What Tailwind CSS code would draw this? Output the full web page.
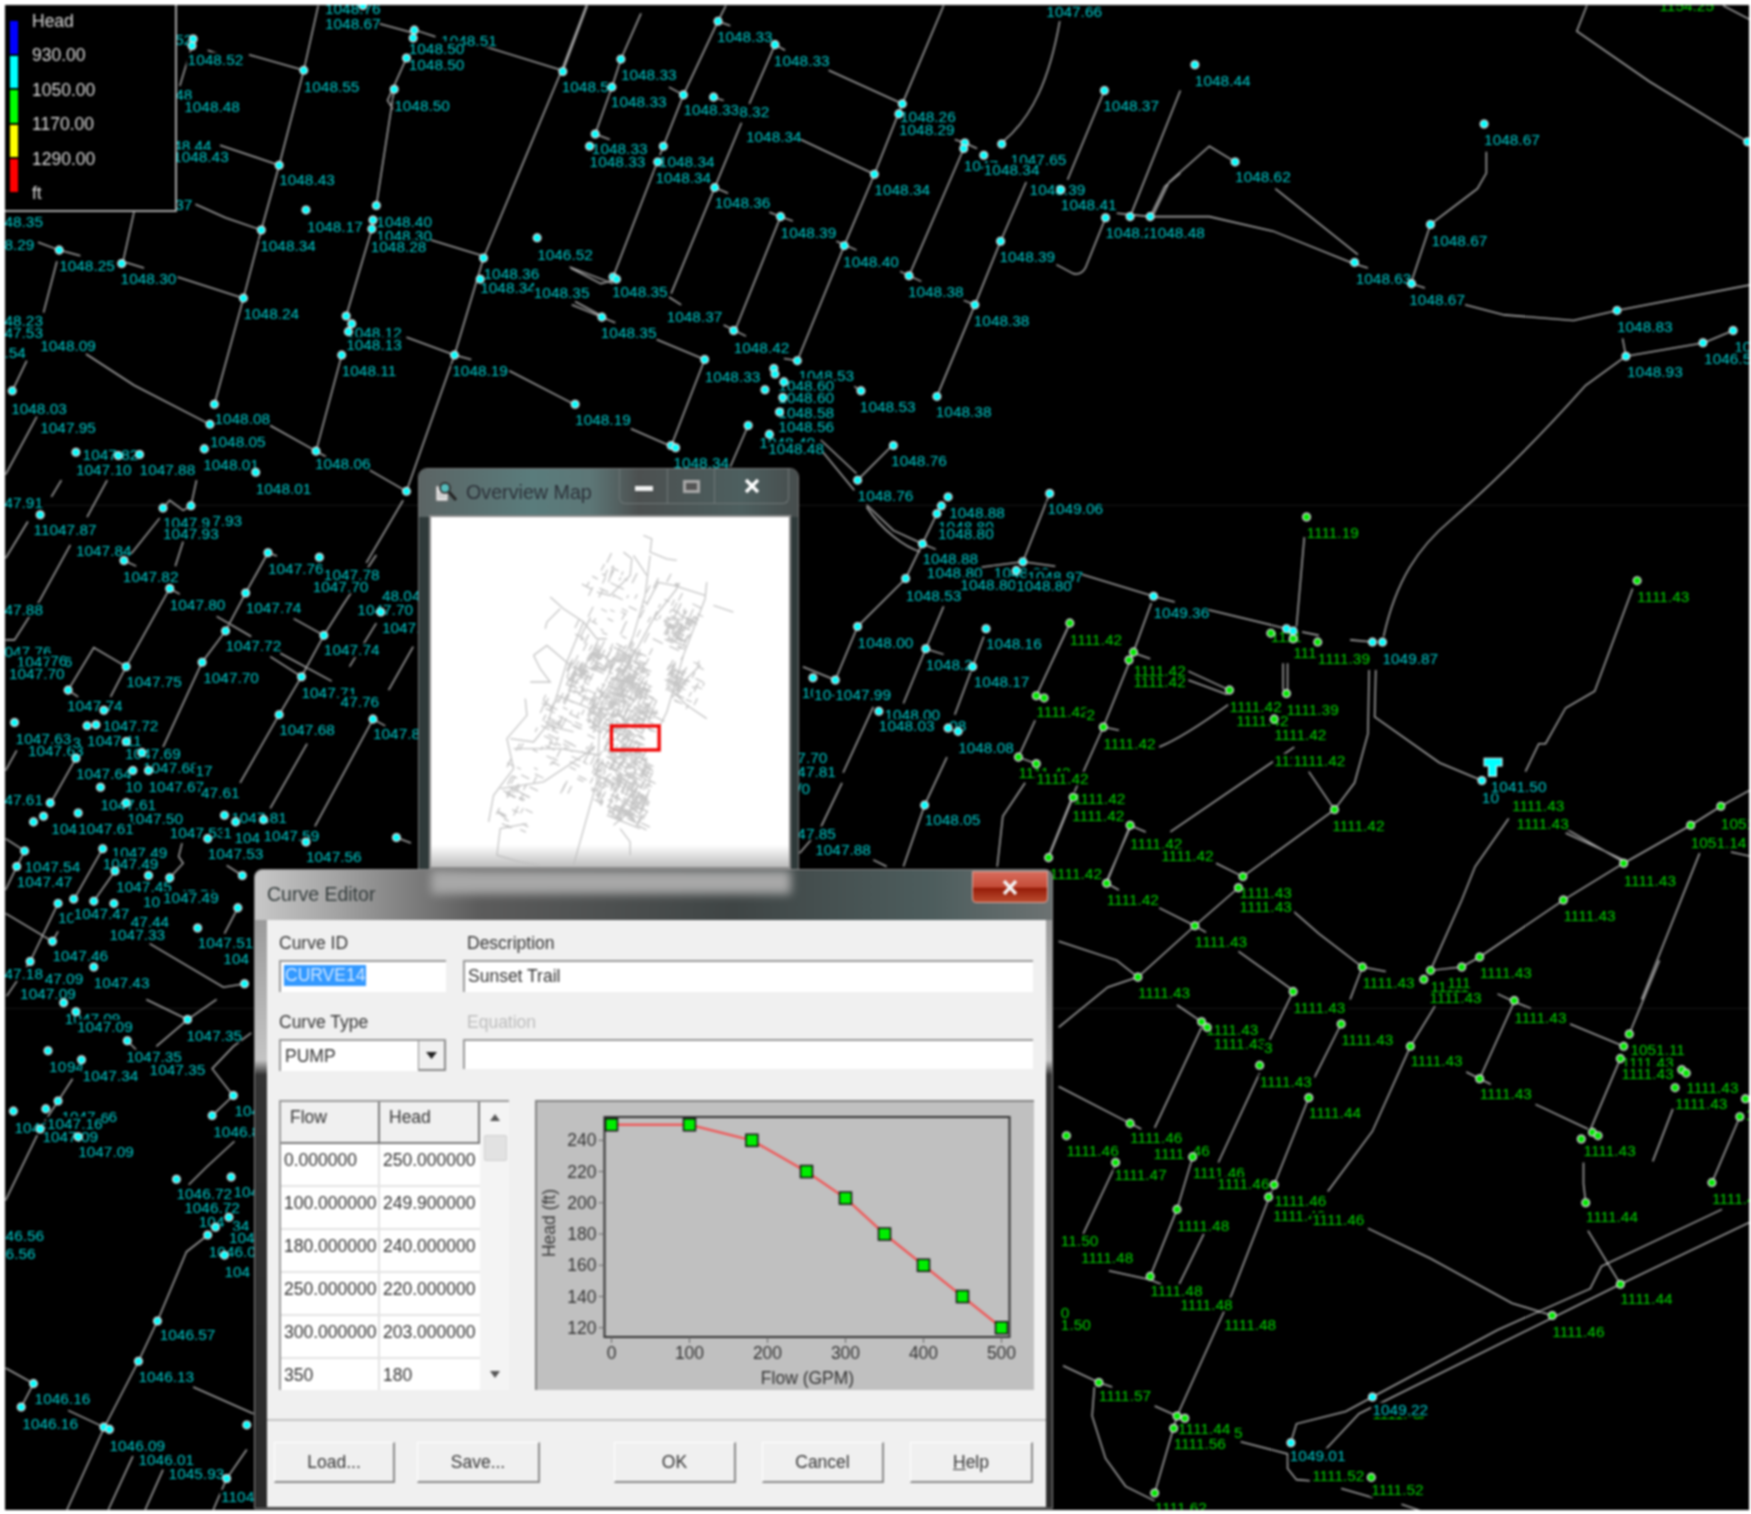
<!DOCTYPE html>
<html lang="en">
<head>
<meta charset="UTF-8">
<script src="https://cdn.jsdelivr.net/npm/@tailwindcss/browser@4"></script>
<title>Network map</title>
</head>
<body>
<div class="relative w-[1751px] h-[1514px] bg-white overflow-hidden [font-family:'Liberation_Sans',Arial,sans-serif] blur-[0.8px]">

  <!-- network canvas -->
  <div class="absolute left-[5px] top-[5px] w-[1744px] h-[1505px] bg-black overflow-hidden">
    <svg id="net" class="block w-full h-full" viewBox="4.5 4.5 1561.7 1347.7"></svg>

    <!-- legend -->
    <div class="absolute left-0 top-0 w-[172px] h-[207px] border-r-2 border-b-2 border-[#a8a8a8] bg-black flex pl-[5px] pt-[16px] gap-[14px]">
      <div class="w-[8px] flex flex-col gap-[2px]">
        <div class="h-[32.500px] bg-[#0000ff]"></div>
        <div class="h-[32.500px] bg-[#00ffff]"></div>
        <div class="h-[32.500px] bg-[#00ff00]"></div>
        <div class="h-[32.500px] bg-[#ffff00]"></div>
        <div class="h-[32.500px] bg-[#ff0000]"></div>
      </div>
      <div class="-mt-[17px] text-[17.5px] leading-[34.4px] text-[#dcdcdc]">
        <div>Head</div><div>930.00</div><div>1050.00</div><div>1170.00</div><div>1290.00</div><div>ft</div>
      </div>
    </div>
  </div>

  <!-- Overview Map window -->
  <div class="absolute left-[418px] top-[468px] w-[381px] h-[410px] rounded-t-[9px] border border-[#777] bg-[linear-gradient(90deg,#2f3a3a,#3b3b3b_50%,#2f3a3a)]">
    <div class="h-[48px] rounded-t-[8px] flex items-start justify-between pl-[14px] pr-[9px] bg-[linear-gradient(90deg,#5b6464,#5a7c7c_30%,#5d7777_45%,#4c5050_58%,#4d5f5f_85%,#474d4d)]">
      <div class="flex items-center gap-[8px] pt-[11px]">
        <svg class="w-[25px] h-[24px]" viewBox="0 0 25 24">
          <path d="M3 6h12v15H3z" fill="#e8e8e8" stroke="#777"/>
          <circle cx="12" cy="8" r="5" fill="#55bcbc" stroke="#333" stroke-width="2"/>
          <path d="M16 12l7 8" stroke="#222" stroke-width="3"/>
          <path d="M5 14h7M5 17h8" stroke="#999"/>
        </svg>
        <span class="text-[19.7px] leading-[24px] text-[#2b3038]">Overview Map</span>
      </div>
      <div class="flex w-[170px] h-[35px] border border-t-0 border-[#707878] rounded-b-[6px] text-white">
        <div class="w-[48px] border-r border-[#707878] flex items-center justify-center"><div class="mt-[4px] w-[18px] h-[5px] bg-[#f0f0f0]"></div></div>
        <div class="w-[47px] border-r border-[#707878] flex items-center justify-center"><div class="w-[17px] h-[13px] border-[3px] border-[#a8a8a8] bg-[#555]"></div></div>
        <div class="flex-1 flex items-center justify-center"><svg class="w-[16px] h-[16px]" viewBox="0 0 16 16"><path d="M2 2l12 12M14 2L2 14" stroke="#fff" stroke-width="3.4"/></svg></div>
      </div>
    </div>
    <div class="relative ml-[12px] w-[358px] h-[350px] bg-white outline-[2px] outline-[#8a8a8a]">
      <svg id="ov" class="block w-full h-full" viewBox="92 205 1075 1050"></svg>
      <div class="absolute left-0 right-0 bottom-0 h-[22px] bg-gradient-to-b from-transparent to-[#bdbdbd]"></div>
    </div>
  </div>

  <!-- Curve Editor window -->
  <div class="absolute left-[254px] top-[869px] w-[799px] h-[640px] rounded-t-[8px] border border-[#8a8a8a] bg-[linear-gradient(180deg,#8c8c8c_0,#c4c4c4_190px,#333_205px,#2a2a2a_100%)]">
    <div class="relative h-[50px] rounded-t-[8px] overflow-hidden flex justify-between bg-[linear-gradient(90deg,#c8c8c8_0%,#a4a4a4_10%,#5c5c5c_28%,#3f4545_60%,#4d5d5d_85%,#6c7272_100%)]">
      <div class="absolute left-[176px] top-[0px] w-[360px] h-[24px] bg-[#a8a8a8] blur-[5px]"></div>
      <span class="relative ml-[12px] mt-[12px] text-[19.5px] leading-[24px] text-[#333b3b]">Curve Editor</span>
      <div class="relative mr-[4px] mt-[1px] w-[76px] h-[32px] rounded-b-[4px] border border-[#d8a8a0] flex items-center justify-center bg-[linear-gradient(180deg,#d86c5c,#c44c38_50%,#961c08_55%,#bb4c30)]">
        <svg class="w-[16px] h-[15px]" viewBox="0 0 16 15"><path d="M2 1l12 13M14 1L2 14" stroke="#f4f4f4" stroke-width="3.4"/></svg>
      </div>
    </div>
    <div class="ml-[12px] mr-[6px] h-[587px] bg-[#f0f0f0] text-[17.5px] leading-[20px] text-[#333] pt-[13px]">
      <div class="grid grid-cols-[167px_570px] gap-x-[17px] px-[12px]">
        <div>Curve ID</div>
        <div class="pl-[4px]">Description</div>
        <div class="mt-[7px] h-[32px] bg-white border-t-2 border-l-2 border-[#9a9a9a] pl-[3px] pt-[3px]"><span class="inline-block bg-[#3399ff] text-[#cfe6ff] px-[1px] leading-[21px]">CURVE14</span></div>
        <div class="mt-[7px] h-[32px] bg-white border-t-2 border-l-2 border-[#9a9a9a] pl-[3px] pt-[4px]">Sunset Trail</div>
        <div class="mt-[20px]">Curve Type</div>
        <div class="mt-[20px] pl-[4px] text-[#bcbcbc]">Equation</div>
        <div class="mt-[7px] h-[32px] bg-white border-t-2 border-l-2 border-[#9a9a9a] pl-[4px] flex justify-between items-center">
          <span>PUMP</span>
          <div class="w-[28px] h-[30px] bg-[#f0f0f0] border-l border-b-2 border-r-2 border-[#8a8a8a] flex items-center justify-center">
            <svg class="w-[11px] h-[7px]" viewBox="0 0 11 7"><path d="M0 0h11L5.500 7z" fill="#222"/></svg>
          </div>
        </div>
        <div class="mt-[7px] h-[30px] bg-white border-t-2 border-l-2 border-[#9a9a9a]"></div>
      </div>

      <div class="mt-[29px] px-[12px] flex gap-[26px] h-[290px]">
        <div class="w-[230px] flex border-t-2 border-l-2 border-[#9a9a9a] bg-white">
          <div class="w-[199px] grid grid-cols-[99px_100px] grid-rows-[42px_43px_43px_43px_43px_43px_1fr] leading-[20px]">
            <div class="bg-[#f0f0f0] border-r-2 border-b-2 border-[#7a7a7a] pl-[9px] pt-[5px]">Flow</div>
            <div class="bg-[#f0f0f0] border-r-2 border-b-2 border-[#7a7a7a] pl-[9px] pt-[5px]">Head</div>
            <div class="pl-[3px] pt-[6px] border-r-2 border-b-2 border-[#e4e4e4]">0.000000</div>
            <div class="pl-[3px] pt-[6px] border-b-2 border-[#e4e4e4]">250.000000</div>
            <div class="pl-[3px] pt-[6px] border-r-2 border-b-2 border-[#e4e4e4]">100.000000</div>
            <div class="pl-[3px] pt-[6px] border-b-2 border-[#e4e4e4]">249.900000</div>
            <div class="pl-[3px] pt-[6px] border-r-2 border-b-2 border-[#e4e4e4]">180.000000</div>
            <div class="pl-[3px] pt-[6px] border-b-2 border-[#e4e4e4]">240.000000</div>
            <div class="pl-[3px] pt-[6px] border-r-2 border-b-2 border-[#e4e4e4]">250.000000</div>
            <div class="pl-[3px] pt-[6px] border-b-2 border-[#e4e4e4]">220.000000</div>
            <div class="pl-[3px] pt-[6px] border-r-2 border-b-2 border-[#e4e4e4]">300.000000</div>
            <div class="pl-[3px] pt-[6px] border-b-2 border-[#e4e4e4]">203.000000</div>
            <div class="pl-[3px] pt-[6px] border-r-2 border-[#e4e4e4]">350</div>
            <div class="pl-[3px] pt-[6px]">180</div>
          </div>
          <div class="relative flex-1 bg-[#f4f4f4] flex flex-col items-center justify-between py-[12px]">
            <svg class="w-[10px] h-[7px]" viewBox="0 0 10 7"><path d="M5 0l5 7H0z" fill="#555"/></svg>
            <div class="absolute left-[4px] top-[33px] w-[23px] h-[26px] bg-[#e2e2e2] border border-[#cfcfcf] rounded-[2px]"></div>
            <svg class="w-[10px] h-[7px]" viewBox="0 0 10 7"><path d="M0 0h10L5 7z" fill="#555"/></svg>
          </div>
        </div>

        <div class="flex-1 bg-[#c0c0c0] border-t-2 border-l-2 border-[#848484]">
          <svg id="chart" class="block w-full h-full" viewBox="0 0 496 288"></svg>
        </div>
      </div>

      <div class="mt-[29px] border-t-2 border-[#c4c4c4]"></div>

      <div class="mt-[21px] px-[7px] flex justify-between text-center leading-[38px]">
        <div class="flex gap-[22px]">
          <div class="w-[121px] h-[41px] border-r-2 border-b-2 border-[#8a8a8a] border-t border-l border-t-white border-l-white">Load...</div>
          <div class="w-[123px] h-[41px] border-r-2 border-b-2 border-[#8a8a8a] border-t border-l border-t-white border-l-white">Save...</div>
        </div>
        <div class="flex gap-[26px] mr-[6px]">
          <div class="w-[122px] h-[41px] border-r-2 border-b-2 border-[#8a8a8a] border-t border-l border-t-white border-l-white">OK</div>
          <div class="w-[122px] h-[41px] border-r-2 border-b-2 border-[#8a8a8a] border-t border-l border-t-white border-l-white">Cancel</div>
          <div class="w-[123px] h-[41px] border-r-2 border-b-2 border-[#8a8a8a] border-t border-l border-t-white border-l-white"><span class="underline">H</span>elp</div>
        </div>
      </div>
    </div>
  </div>
</div>

<script>
// pipes, in the 1568 wide coordinates of the map
const pipes = [
  "M525,5L503,63L433,231L407,318L364,440","M272,63L250,148L234,206L218,267L192,362","M285,5L272,63","M337,184L353,80","M364,52L347,90L352,98","M333,205L310,283","M306,318L283,404",
  "M171,44L161,77","M120,190L110,235","M51,234L39,280","M24,323L11,350","M33,373L5,425","M186,45L200,50","M223,49L272,63","M339,21L372,30","M372,27L390,33","M419,37L503,63",
  "M197,130L250,148","M175,183L202,195L234,206","M34,217L53,224L72,229","M113,235L129,240","M159,248L218,267","M383,214L435,230","M364,302L407,318L422,322","M456,332L516,363","M77,317L120,345L188,380","M242,381L283,404L292,409","M331,421L364,440","M511,240L538,254L553,250","M515,270L539,283",
  "M949,19C940,70 925,105 897,128","M845,5L808,93L783,156L756,220L714,323","M650,5L643,19L612,85L594,131L549,248","M574,12L556,53L548,78L533,120","M526,5L504,64","M694,40L671,93","M664,110L640,168L601,263","M699,194L659,294","M631,322L602,397","M670,381L654,418","M863,133L814,247","M919,163L896,216L873,273L839,355","M989,81L956,161","M1057,81L1012,194","M990,195L972,240Q968,247 961,245L946,237","M1030,194L1043,167L1057,155",
  "M643,19L654,23","M694,40L703,45","M742,63L808,93","M717,125L783,156","M599,78L612,85","M639,87L648,90","M533,120L546,125","M640,168L652,173","M689,190L699,194L710,198","M749,216L767,224","M806,243L825,252","M863,269L873,273","M588,304L631,322","M510,239L549,254","M512,273L539,284L551,289","M599,266L610,273","M648,291L668,301","M565,384L604,401","M702,321L714,323","M765,346L771,350","M735,394L767,424","M799,399L768,430","M855,125L864,128L875,133",
  "M1000,191L1030,194L1057,194L1083,194L1140,207L1212,236","M1032,194L1047,163L1083,131L1106,145","M1142,169L1216,228","M1281,201L1264,252","M1331,136L1331,155L1323,169L1281,201","M1212,236L1225,240","M1264,254L1276,258","M1312,273L1347,282L1409,287L1448,278L1568,255","M1453,303L1456,319","M1456,319L1526,307L1552,296","M1421,5L1412,28L1477,73L1565,127","M1543,5L1568,18",
  "M737,405L765,439","M776,452L800,475L826,487L838,492","M776,454C790,475 810,490 824,494","M839,460L826,487L811,518L768,561L748,609","M940,442L916,503","M878,508L916,503L945,507","M964,513L1033,534L1052,539","M1031,540L1015,584L988,651L960,714L940,764","M1082,546L1152,563L1181,569","M1209,573L1229,575","M845,543L829,581L809,630","M829,581L845,586","M881,570L871,597L855,640","M848,678L828,721L809,776","M958,558L928,623","M927,645L912,678L928,684","M918,701L898,731L893,776","M719,597L748,609","M782,633L755,692","M754,701L734,743L716,764","M782,770L794,776","M961,714L939,768","M1013,739L990,791",
  "M1239,570C1250,520 1270,490 1300,465C1340,430 1380,390 1420,345L1456,319","M1168,481L1161,561","M956,563L940,597","M1016,585L1030,590","M1064,601L1101,618","M1064,609L1099,622","M1038,669Q1060,660 1100,631","M988,651L1002,654","M1149,594L1149,618","M1153,594L1153,620","M1226,600L1225,657L1213,701L1195,725","M1232,600L1231,642L1289,683L1327,699","M1172,691L1195,725","M1048,745L1159,669","M1195,725L1113,785L1089,773","M1012,739L1026,745","M1012,739L991,791","M991,791L1002,797","M1038,813L1070,829L1080,835","M1109,795L1070,829L1019,875L992,884L948,920","M1109,852L1158,887","M1157,815L1181,836L1220,866L1241,870","M1220,866L1209,895","M1351,733L1321,776L1309,806L1281,869L1309,866","M1309,866L1325,857L1400,806L1454,773L1514,739L1541,722L1568,707","M1402,746L1454,770","M1402,742L1456,773","M1522,764L1470,895","M1550,763L1568,767","M1366,691L1378,666L1384,666L1402,634L1428,619L1462,527","M948,843L1000,860L1019,875",
  "M1054,900L1076,915","M1076,920L1034,1010","M1158,888L1137,931","M1128,961L1091,1041","M1201,917L1177,965","M1172,983L1141,1061L1103,1159L1054,1268L1034,1337","M1285,901L1263,937L1229,1013L1189,1067","M1356,897L1325,966","M1486,860L1459,926","M1451,948L1424,1012","M1498,993L1480,1040","M1558,1000L1533,1059","M1418,1041L1418,1060L1420,1077","M1341,890L1356,897L1371,903","M1406,917L1454,937","M1313,960L1325,966L1335,971","M1375,989L1422,1011","M948,973L1012,1006L1022,1011","M1000,1041L970,1105","M1068,1036L1054,1083L1030,1143","M1078,1105L1056,1150","M993,1138L1030,1146L1040,1150","M1225,1100L1281,1127L1354,1167L1390,1178","M1422,1102L1451,1150","M952,1223L984,1238L996,1242","M980,1242L978,1268L990,1306L1008,1331L1034,1344","M1034,1259L1054,1268","M1111,1291L1153,1302L1153,1315L1161,1325L1173,1326","M1201,1333L1229,1341","M1255,1347L1281,1356","M1157,1288L1161,1275L1205,1264L1229,1251L1341,1191L1424,1154L1434,1134L1542,1083","M1187,1298L1217,1266L1451,1150L1568,1094",
  "M146,455L152,448L164,457L171,453","M171,453L176,430","M96,430L78,463","M55,430L46,445","M25,467L5,500","M63,488L36,537L13,573L5,573","M143,464L119,494L111,502","M164,485L157,507","M111,502L122,507","M152,527L113,597L99,624","M152,527L161,532","M361,448L328,504","M240,495L220,531L202,565L181,593L146,669","M307,542L290,569L270,606L250,640L215,701","M337,497L307,542","M337,558L313,597","M275,666L242,724","M370,579L348,618","M334,644L282,740","M248,498L240,495","M225,570L194,552","M297,610L251,585","M270,606L242,588","M263,554L290,569","M61,618L84,580L113,597","M61,618L70,624","M68,679L46,718","M15,672L5,690","M5,751L22,762","M22,762L15,776L5,797","M92,760L67,804","M103,780L84,807","M52,809L27,861L6,892","M5,818L47,843L52,834","M134,845L200,884L219,881","M163,755L160,767L164,773L152,786","M203,775L217,784","M213,813L201,836","M334,644L345,650","M355,750L368,755",
  "M131,895L168,913L194,895","M168,913L140,937","M225,925L209,937L190,957L207,979","M209,981L190,999","M114,932L122,940","M210,1022L185,1045L169,1061","M65,966L52,986L37,1009L5,1075","M186,1106L167,1121L141,1183L124,1219L93,1279L60,1352","M5,1225L30,1239L19,1260","M61,1263L93,1278","M119,1304L97,1352","M146,1316L130,1352","M173,1242L227,1266","M221,1298L203,1324L191,1352"
];

// node dots
const cyanNodes = [[173,35],[172,41],[272,63],[353,80],[371,27],[370,34],[364,52],[325,5],[250,148],[234,206],[274,188],[337,184],[333,205],[334,197],[53,224],[109,236],[218,267],[310,283],[315,290],[312,297],[306,318],[407,318],[433,231],[430,250],[481,213],[11,350],[192,362],[188,380],[183,402],[283,404],[229,423],[68,405],[106,408],[125,407],[364,440],
[643,19],[694,40],[556,53],[548,78],[612,85],[639,87],[533,120],[528,131],[594,131],[589,145],[640,168],[699,194],[756,220],[814,247],[873,273],[783,156],[808,93],[805,102],[864,128],[863,133],[881,139],[897,129],[950,170],[896,216],[989,81],[990,195],[1012,194],[1030,194],[839,355],[771,350],[714,323],[693,330],[694,335],[702,342],[685,349],[701,356],[698,369],[670,381],[689,389],[800,399],[657,296],[631,322],[539,284],[549,248],[552,250],[515,362],[601,399],[605,401],[504,64],[1070,58],[1106,145],[1329,111],[1281,201],[1213,235],[1264,254],[1448,278],[1456,319],[1525,307],[1552,296],[1565,127],
[768,430],[849,445],[843,453],[839,460],[826,487],[940,442],[916,503],[910,511],[1033,534],[811,518],[768,561],[883,563],[829,581],[871,597],[728,607],[748,609],[787,637],[849,652],[858,655],[828,721],[1152,563],[1158,565],[1229,575],[1238,575],[1327,699],[1229,1251],[1156,1292],
[146,455],[171,453],[36,461],[111,502],[152,527],[240,495],[220,531],[286,499],[341,548],[290,569],[202,565],[181,593],[270,606],[113,597],[61,618],[93,636],[78,650],[86,649],[13,647],[113,664],[68,679],[250,640],[334,644],[127,674],[119,690],[133,690],[90,705],[45,719],[39,731],[30,736],[113,719],[70,728],[201,730],[211,736],[236,734],[186,751],[274,754],[355,750],[22,762],[15,776],[92,760],[103,780],[133,784],[152,786],[217,784],[213,813],[52,809],[66,805],[84,807],[102,809],[177,831],[47,843],[27,861],[84,866],[219,881],
[57,898],[68,906],[168,913],[114,932],[43,941],[73,949],[209,981],[190,999],[52,986],[41,993],[12,995],[36,1011],[70,1018],[158,1056],[207,1054],[205,1090],[193,1099],[186,1106],[201,1124],[141,1183],[124,1219],[30,1239],[19,1260],[93,1278],[98,1280],[221,1276],[203,1324]];

const greenNodes = [[1170,463],[1015,584],[1011,591],[1101,618],[1141,644],[1152,621],[988,651],[958,558],[1138,567],[1158,572],[1180,575],[1195,725],[1466,520],[1514,739],[1541,722],[1454,773],[1400,806],[961,714],[1012,739],[991,791],[1113,785],[1109,795],[1070,829],[1019,875],[1220,866],[1281,869],[1275,877],[1309,866],[1325,857],[1158,888],[1356,896],[928,623],[935,625],[912,678],[928,684],[939,768],
[1076,915],[1081,920],[1201,917],[1263,937],[1454,937],[1459,926],[1451,948],[1128,954],[1325,966],[1172,983],[1506,958],[1510,961],[1500,974],[1563,984],[1558,1000],[1012,1006],[955,1017],[1068,1036],[999,1041],[1141,1061],[1136,1072],[1054,1083],[1426,1014],[1431,1017],[1416,1020],[1420,1077],[1533,1059],[1030,1143],[1451,1150],[1390,1178],[984,1238],[1054,1268],[1061,1270],[1051,1279],[1034,1337],[1228,1323]];

// labels: earlier ones get cut off by the black box of later ones, as in the map
const cyanLabels = [
[291,8,"1048.76"],[291,21,"1048.67"],[395,36,"1048.51"],[366,43,"1048.50"],[366,58,"1048.50"],[353,94,"1048.50"],[157,35,"52"],[168,53,"1048.52"],[272,77,"1048.55"],[157,85,"48"],[165,95,"1048.48"],[155,130,"48.44"],[155,140,"1048.43"],[250,161,"1048.43"],[157,183,"37"],[233,220,"1048.34"],[275,203,"1048.17"],[337,198,"1048.40"],[337,211,"1048.30"],[332,221,"1048.28"],[4,198,"48.35"],[4,219,"8.29"],[53,238,"1048.25"],[108,249,"1048.30"],[218,281,"1048.24"],[4,287,"48.23"],[4,298,"47.53"],[4,316,".54"],[36,309,"1048.09"],[310,298,"1048.12"],[310,308,"1048.13"],[306,332,"1048.11"],[405,332,"1048.19"],[515,376,"1048.19"],[433,245,"1048.36"],[430,257,"1048.34"],[478,262,"1048.35"],[481,228,"1046.52"],[10,366,"1048.03"],[36,383,"1047.95"],[192,375,"1048.08"],[188,395,"1048.05"],[182,416,"1048.01"],[282,415,"1048.06"],[229,437,"1048.01"],[74,407,"1047.82"],[68,420,"1047.10"],[125,420,"1047.88"],
[642,33,"1048.33"],[693,54,"1048.33"],[556,67,"1048.33"],[503,77,"1048.5"],[547,91,"1048.33"],[612,98,"1048.33"],[662,100,"8.32"],[668,122,"1048.34"],[530,133,"1048.33"],[528,145,"1048.33"],[590,145,"1048.34"],[587,159,"1048.34"],[640,181,"1048.36"],[699,208,"1048.39"],[755,234,"1048.40"],[813,261,"1048.38"],[872,287,"1048.38"],[538,298,"1048.35"],[597,283,"1048.37"],[548,261,"1048.35"],[783,170,"1048.34"],[806,104,"1048.26"],[805,116,"1048.29"],[863,148,"1047"],[905,143,"1047.65"],[881,152,"1048.34"],[922,170,"1048.39"],[950,183,"1048.41"],[990,208,"1048.2"],[1029,208,"1048.48"],[895,230,"1048.39"],[988,94,"1048.37"],[1070,72,"1048.44"],[1106,158,"1048.62"],[1329,125,"1048.67"],[1282,215,"1048.67"],[1214,249,"1048.63"],[1262,268,"1048.67"],[1448,292,"1048.83"],[1457,333,"1048.93"],[1553,310,"10"],[1526,321,"1046.5"],[657,311,"1048.42"],[631,337,"1048.33"],[715,336,"1048.53"],[697,345,"1048.60"],[697,356,"1048.60"],[697,369,"1048.58"],[697,382,"1048.56"],[680,396,"1048.40"],[688,402,"1048.48"],[770,364,"1048.53"],[838,368,"1048.38"],[798,412,"1048.76"],[603,414,"1048.34"],
[768,444,"1048.76"],[850,459,"1048.88"],[840,471,"1048.80"],[840,478,"1048.80"],[938,455,"1049.06"],[826,500,"1048.88"],[830,513,"1048.80"],[890,513,"1048.80"],[920,516,"1048.97"],[860,523,"1048.80"],[910,524,"1048.80"],[811,533,"1048.53"],[1033,548,"1049.36"],[768,575,"1048.00"],[883,576,"1048.16"],[829,595,"1048.2"],[872,610,"1048.17"],[718,620,"10"],[729,622,"10-"],[748,622,"1047.99"],[792,640,"1048.00"],[850,650,"08"],[787,650,"1048.03"],[858,669,"1048.08"],[828,734,"1048.05"],[714,678,"7.70"],[714,691,"47.81"],[714,706,"/0"],[714,746,"47.85"],[730,761,"1047.88"],
[4,450,"47.91"],[30,474,"11047.87"],[68,493,"1047.84"],[110,516,"1047.82"],[146,468,"1047.93"],[146,478,"1047.93"],[190,466,"7.93"],[152,541,"1047.80"],[220,544,"1047.74"],[240,509,"1047.76"],[280,525,"1047.70"],[290,514,"1047.78"],[342,533,"48.04"],[320,546,"1047.70"],[342,562,"1047."],[202,578,"1047.72"],[290,582,"1047.74"],[113,610,"1047.75"],[182,607,"1047.70"],[270,620,"1047.71"],[305,628,"47.76"],[4,546,"47.88"],[4,583,"047.76"],[15,592,"1047.76"],[45,591,"76"],[8,603,"1047.70"],[60,632,"1047.74"],[92,650,"1047.72"],[250,653,"1047.68"],[334,657,"1047.8"],[25,672,"1047.63"],[14,661,"1047.63"],[65,665,"3"],[78,663,"1047.11"],[112,675,"1047.69"],[68,693,"1047.64"],[128,687,"1047.68"],[175,690,"17"],[112,704,"10"],[133,704,"1047.67"],[180,710,"47.61"],[4,716,"47.61"],[90,720,"1047.61"],[46,742,"1047.11"],[114,733,"1047.50"],[70,742,"1047.61"],[152,745,"1047.53"],[207,732,"1047.81"],[200,745,"1"],[210,750,"104"],[236,748,"1047.59"],[186,764,"1047.53"],[274,767,"1047.56"],[22,776,"1047.54"],[15,789,"1047.47"],[100,763,"1047.49"],[92,773,"1047.49"],[104,794,"1047.45"],[160,801,"47.51"],[128,807,"10"],[146,804,"1047.49"],[52,822,"10"],[66,818,"1047.47"],[98,837,"1047.33"],[117,825,"47.44"],[177,844,"1047.51"],[200,858,"104"],[47,856,"1047.46"],[4,872,"47.18"],[40,876,"47.09"],[84,880,"1047.43"],[18,890,"1047.09"],
[58,912,"1047.09"],[69,919,"1047.09"],[167,927,"1047.35"],[113,946,"1047.35"],[134,958,"1047.35"],[44,955,"1047"],[60,955,"94"],[74,963,"1047.34"],[55,1000,"1047.16"],[90,1001,"6"],[13,1010,"1048"],[38,1018,"1047.09"],[42,1006,"1047.16"],[70,1031,"1047.09"],[5,1106,"46.56"],[5,1122,"6.56"],[165,1081,"1046.72"],[158,1069,"1046.72"],[209,1067,"104"],[210,994,"104"],[191,1013,"1046.8"],[178,1094,"104"],[208,1097,"34"],[205,1108,"104"],[187,1121,"1046.0"],[201,1139,"104"],[143,1195,"1046.57"],[124,1233,"1046.13"],[31,1252,"1046.16"],[20,1275,"1046.16"],[98,1294,"1046.09"],[124,1307,"1046.01"],[151,1319,"1045.93"],[198,1340,"1104"],
[1229,1262,"1049.22"],[1155,1303,"1049.01"],[1327,714,"10"],[1335,704,"1041.50"],[1238,590,"1049.87"],[937,10,"1047.66"]
];
const greenLabels = [
[1170,477,"1111.19"],[1466,534,"1111.43"],[958,573,"1111.42"],[1015,610,"1111.42"],[1015,600,"1111.42"],[1107,645,"1111.42"],[1101,633,"1111.42"],[1152,635,"1111.39"],[1141,658,"1111.42"],[1141,681,"1111.42"],[1158,681,"1111.42"],[928,637,"1111.42"],[973,640,"2"],[988,666,"1111.42"],[912,692,"1111.42"],[928,697,"1111.42"],[1193,739,"1111.42"],[961,715,"1111.42"],[960,730,"1111.42"],[1012,755,"1111.42"],[1040,766,"1111.42"],[940,782,"1111.42"],[991,805,"1111.42"],[1110,812,"1111.43"],[1110,799,"1111.43"],[1070,843,"1111.43"],[1019,889,"1111.43"],[1138,570,"1111"],[1158,584,"111"],[1180,590,"1111.39"],[1354,721,"1111.43"],[1358,737,"1111.43"],[1454,788,"1111.43"],[1400,820,"1111.43"],[1220,880,"1111.43"],[1280,893,"1111.43"],[1281,883,"11111"],[1296,880,"111"],[1325,871,"1111.43"],[1158,902,"1111.43"],[1080,922,"1111.43"],[1087,934,"1111.43"],[1132,938,"3"],[1201,931,"1111.43"],[1356,911,"1111.43"],[1128,968,"1111.43"],[1263,950,"1111.43"],[1325,979,"1111.43"],[1460,940,"1051.11"],[1452,951,"1111.43"],[1452,961,"1111.43"],[1510,974,"1111.43"],[1500,988,"1111.43"],[1418,1030,"1111.43"],[1172,996,"1111.44"],[1420,1089,"1111.44"],[1451,1163,"1111.44"],[1533,1073,"1111.4"],[1012,1019,"1111.46"],[955,1030,"1111.46"],[998,1052,"1111.47"],[1033,1033,"1111"],[1068,1030,"46"],[1068,1050,"1111.46"],[1090,1060,"1111.46"],[1141,1075,"1111.46"],[1140,1088,"1111.46"],[1175,1092,"1111.46"],[1054,1097,"1111.48"],[950,1111,"11.50"],[968,1126,"1111.48"],[1030,1156,"1111.48"],[1057,1168,"1111.48"],[1096,1186,"1111.48"],[950,1186,"1.50"],[950,1175,"0"],[1390,1192,"1111.46"],[984,1250,"1111.57"],[1055,1279,"1111.44"],[1105,1283,"5"],[1051,1293,"1111.56"],[1229,1266,"1111.43"],[1265,1266,"3"],[1175,1321,"1111.52"],[1228,1334,"1111.52"],[1034,1350,"1111.62"],[1514,754,"1051.14"],[1541,737,"1051"],[1486,5,"1154.25"],[1563,998,"1"]
];

const net = document.getElementById('net');
const labelSvg = (list, colour) => list.map(([x, y, t]) =>
  `<rect x="${x - 1}" y="${y - 6}" width="${t.length * 7 + 1}" height="12.500" fill="#000"/><text x="${x}" y="${y + 5}" fill="${colour}" font-size="13.800">${t}</text>`).join('');
const nodeSvg = (list, colour) => list.map(([x, y]) =>
  `<circle cx="${x}" cy="${y}" r="3.400" fill="${colour}" stroke="#dcdcdc" stroke-width="1.300"/>`).join('');

net.innerHTML =
  `<path d="M0,452.500H1568M0,903H1568" stroke="#1c1c1c" stroke-width="0.800"/>` +
  `<path d="${pipes.join('')}" fill="none" stroke="#a2a2a2" stroke-width="1.400"/>` +
  labelSvg(greenLabels, '#00d400') + labelSvg(cyanLabels, '#00caca') +
  nodeSvg(cyanNodes, '#00ffff') + nodeSvg(greenNodes, '#00e800') +
  // tank
  `<path d="M1329,679h16v7h-5v9h-7v-9h-4z" fill="#00ffff" stroke="#e8ffff" stroke-width="1"/>`;

// pump curve chart
const pts = [[0,250],[100,250],[180,240],[250,220],[300,203],[350,180],[400,160],[450,140],[500,120]];
const cx = v => 74 + v * 0.78;
const cy = h => 22.700 + (250 - h) * 1.562;
let c = `<rect x="67" y="15" width="405" height="220" fill="none" stroke="#333" stroke-width="2"/>`;
c += `<g font-size="17.500" fill="#333">`;
for (let h = 120; h <= 240; h += 20) {
  c += `<path d="M61,${cy(h)}H67" stroke="#666"/><text x="59" y="${cy(h) + 6}" text-anchor="end">${h}</text>`;
}
for (let v = 0; v <= 500; v += 100) {
  c += `<path d="M${cx(v)},235V241" stroke="#666"/><text x="${cx(v)}" y="257" text-anchor="middle">${v}</text>`;
}
c += `<text x="270" y="282" text-anchor="middle">Flow (GPM)</text>`;
c += `<text transform="translate(17,121) rotate(-90)" text-anchor="middle">Head (ft)</text></g>`;
c += `<polyline points="${pts.map(p => cx(p[0]) + ',' + cy(p[1])).join(' ')}" fill="none" stroke="#ee5c5c" stroke-width="2.500"/>`;
pts.forEach(p => { c += `<rect x="${cx(p[0]) - 6}" y="${cy(p[1]) - 6}" width="12" height="12" fill="#00ee00" stroke="#111" stroke-width="1.500"/>`; });
document.getElementById('chart').innerHTML = c;

// overview map: hand drawn trunk lines plus a seeded scatter for the dense streets
const trunk = "M730,260L755,270L750,310L800,330L830,335M750,320L740,400L735,440L700,560L600,800L590,1000L520,1250M670,310L695,330L690,380L630,440L590,430M640,350L625,400M450,445L490,480L550,520L590,570L620,570M480,480L440,520L435,540M550,520L500,640L470,740L440,830L400,880L330,870M920,400L915,450L850,620L800,790L780,830M770,400L820,410L915,440M940,470L1000,490M830,420L760,510L700,620L640,720M400,620L440,590L510,650M400,620L420,660L450,700L390,700M375,750L380,800L320,870L340,960L280,1040L265,1120M300,1020L430,1000L580,900M340,900L480,900L600,920M880,640L900,650L820,730L860,770L920,810M380,1125L300,1140L290,1220L360,1240L420,1250M660,1140L690,1180L690,1220M700,1080L640,1130M620,1100L720,1140M440,830L520,850M470,740L570,780M700,320L740,380";
let seed = 42;
const rnd = () => { seed = (seed * 16807) % 2147483647; return seed / 2147483647; };
const blobs = [[660,790,105,100,300],[660,1000,90,115,300],[680,680,60,85,130],[530,690,38,52,70],[830,540,42,62,70],[820,700,30,52,50],[590,630,32,32,45],[340,1030,32,32,20],[450,800,45,65,25],[700,1090,35,45,25],[640,550,130,130,50],[500,850,130,130,45],[450,950,130,100,30],[800,480,100,80,35],[620,400,80,60,20],[330,1100,50,60,15],[860,700,50,90,20]];
let dense = '';
blobs.forEach(([x0, y0, rx, ry, n]) => {
  for (let i = 0; i < n; i++) {
    const a = rnd() * 6.283, r = Math.sqrt(rnd());
    const x = x0 + Math.cos(a) * r * rx, y = y0 + Math.sin(a) * r * ry;
    const len = 10 + rnd() * 24;
    dense += rnd() < 0.5
      ? `M${x.toFixed(0)},${y.toFixed(0)}l${(len * 0.45).toFixed(0)},${(-len * 0.9).toFixed(0)}`
      : `M${x.toFixed(0)},${y.toFixed(0)}l${(len * 0.9).toFixed(0)},${(len * 0.45).toFixed(0)}`;
  }
});
document.getElementById('ov').innerHTML =
  `<path d="${trunk}${dense}" fill="none" stroke="#c6c6c6" stroke-width="4"/>` +
  `<rect x="634" y="832" width="143" height="72" fill="none" stroke="#f00000" stroke-width="10"/>`;
</script>
</body>
</html>
